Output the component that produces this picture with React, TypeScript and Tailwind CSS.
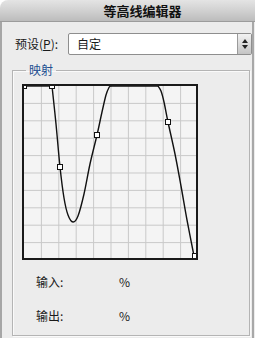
import React from "react";

type P = [number, number];

function catmull(points: P[]): string {
  let d = `M ${points[0][0]} ${points[0][1]}`;
  for (let i = 0; i < points.length - 1; i++) {
    const p0 = points[i - 1] || points[i];
    const p1 = points[i];
    const p2 = points[i + 1];
    const p3 = points[i + 2] || p2;
    const c1x = p1[0] + (p2[0] - p0[0]) / 6;
    const c1y = p1[1] + (p2[1] - p0[1]) / 6;
    const c2x = p2[0] - (p3[0] - p1[0]) / 6;
    const c2y = p2[1] - (p3[1] - p1[1]) / 6;
    d += ` C ${c1x.toFixed(2)} ${c1y.toFixed(2)}, ${c2x.toFixed(2)} ${c2y.toFixed(2)}, ${p2[0]} ${p2[1]}`;
  }
  return d;
}

// absolute image coords; graph box at (22,85)
const OX = 22;
const OY = 85;
const t = (pts: P[]): P[] => pts.map(([x, y]) => [x - OX, y - OY] as P);

const seg1 = t([
  [52, 87], [56, 125], [60, 168], [64, 199], [68, 216], [73, 223], [78, 217], [84, 195], [90, 165], [97, 136], [102, 113], [106, 96], [109, 88.5], [111, 87],
]);
const seg2 = t([
  [158, 87], [161, 92], [164, 103], [168, 123], [175, 155], [181, 187], [187, 221], [194, 257],
]);

const handles = t([
  [24, 87], [52, 87], [60, 168], [97, 136], [168, 123], [195, 257],
]);

function Graph() {
  const grid: number[] = [];
  for (let i = 1; i < 10; i++) grid.push(i * 17.4);
  const top = 87 - OY;
  return (
    <div className="w-[176px] h-[176px] border-2 border-[#1a1a1a] bg-[#f4f4f4]">
      <svg width="172" height="172" viewBox="0 0 172 172" className="block">
        {grid.map((g) => (
          <line key={"v" + g} x1={g} y1={0} x2={g} y2={172} stroke="#c9c9c9" strokeWidth="1" />
        ))}
        {grid.map((g) => (
          <line key={"h" + g} x1={0} y1={g} x2={172} y2={g} stroke="#c9c9c9" strokeWidth="1" />
        ))}
        <g transform="translate(-2,-2)">
          <line x1={24 - OX} y1={top} x2={52 - OX} y2={top} stroke="#111" strokeWidth="1.4" />
          <path d={catmull(seg1)} fill="none" stroke="#111" strokeWidth="1.4" />
          <line x1={111 - OX} y1={top} x2={158 - OX} y2={top} stroke="#111" strokeWidth="1.4" />
          <path d={catmull(seg2)} fill="none" stroke="#111" strokeWidth="1.4" />
          {handles.map(([x, y], i) => (
            <rect key={i} x={x - 2.5} y={y - 2.5} width="5" height="5" fill="#fff" stroke="#111" strokeWidth="1" />
          ))}
        </g>
      </svg>
    </div>
  );
}

export default function App() {
  return (
    <div className="w-[255px] h-[338px] bg-white overflow-hidden font-['Noto_Sans_CJK_SC','Noto_Sans',sans-serif] text-[12px] text-[#1a1a1a]">
      <div className="h-[22px] rounded-tl-[8px] bg-[linear-gradient(#e4e4e4,#cfcfcf_55%,#bcbcbc)] border-b border-[#9c9c9c] flex items-center justify-center">
        <span className="ml-[30px] font-bold text-[13px] leading-none text-[#111]">等高线编辑器</span>
      </div>
      <div className="h-[316px] bg-[#ececec] border-l-2 border-[#a6a6a6] flex">
        <div className="w-[250px] flex flex-col">
          <div className="mt-[11px] h-[22px] flex items-center">
            <span className="ml-[13px] w-[53px] leading-[16px]">
              预设(<span className="underline">P</span>):
            </span>
            <div className="w-[184px] h-[22px] bg-white border border-[#8e8e8e] rounded-[2px] flex items-center">
              <span className="ml-[8px] flex-1 leading-[16px]">自定</span>
              <div className="w-[14px] h-[20px] bg-[linear-gradient(#f2f2f2,#c4c4c4)] border-l border-[#9a9a9a] flex flex-col items-center justify-center gap-[2px]">
                <div className="w-0 h-0 border-l-[3px] border-r-[3px] border-b-[4px] border-l-transparent border-r-transparent border-b-[#222]" />
                <div className="w-0 h-0 border-l-[3px] border-r-[3px] border-t-[4px] border-l-transparent border-r-transparent border-t-[#222]" />
              </div>
            </div>
          </div>
          <fieldset className="mt-[7px] ml-[10px] w-[238px] h-[274px] border border-[#b4b4b4] shadow-[inset_1px_1px_0_#fafafa,1px_1px_0_#fafafa]">
            <legend className="ml-[13px] px-[3px] text-[#1d4f91] leading-[16px]">映射</legend>
            <div className="ml-[9px] mt-[6px]">
              <Graph />
            </div>
            <div className="mt-[14px] ml-[23px] flex leading-[16px]">
              <span className="w-[83px]">输入:</span>
              <span>%</span>
            </div>
            <div className="mt-[18px] ml-[23px] flex leading-[16px]">
              <span className="w-[83px]">输出:</span>
              <span>%</span>
            </div>
          </fieldset>
        </div>
        <div className="w-[2px] bg-[#a8a8a8]" />
      </div>
    </div>
  );
}
